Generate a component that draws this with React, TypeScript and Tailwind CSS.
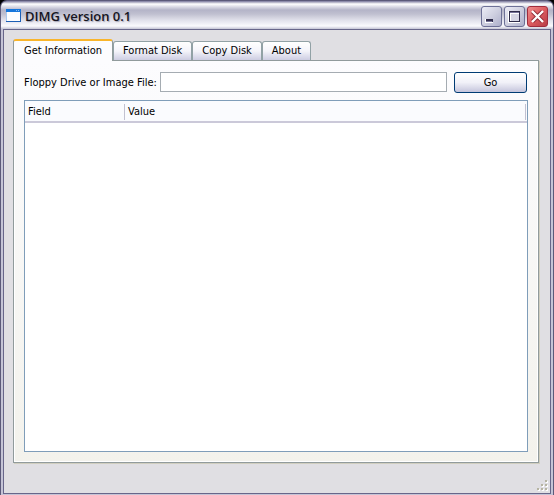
import { useState } from "react";

const TABS = ["Get Information", "Format Disk", "Copy Disk", "About"];

function WindowIcon() {
  return (
    <svg className="h-[15px] w-4" viewBox="0 1 16 15" shapeRendering="crispEdges" aria-hidden="true">
      <rect x="0" y="1" width="15" height="13" fill="#1c5fb5" />
      <rect x="0" y="1" width="15" height="3" fill="#1676dc" />
      <rect x="10" y="2" width="1" height="1" fill="#8dbdf0" />
      <rect x="12" y="2" width="1" height="1" fill="#8dbdf0" />
      <rect x="0" y="4" width="1" height="9" fill="#a9c8ee" />
      <rect x="1" y="4" width="13" height="9" fill="#fcfdff" />
    </svg>
  );
}

function MinimizeIcon() {
  return (
    <svg className="h-[19px] w-[19px]" viewBox="0 0 19 19" shapeRendering="crispEdges" aria-hidden="true">
      <rect x="3" y="12" width="8" height="4" fill="#fff" />
      <rect x="4" y="12" width="7" height="3" fill="#2f2c4a" />
      <rect x="4" y="14" width="6" height="1" fill="#77749a" />
    </svg>
  );
}

function MaximizeIcon() {
  return (
    <svg className="h-[19px] w-[19px]" viewBox="0 0 19 19" shapeRendering="crispEdges" aria-hidden="true">
      <rect x="3" y="4" width="12" height="12" fill="#fff" />
      <rect x="4" y="4" width="11" height="11" fill="#2f2c4a" />
      <rect x="5" y="5" width="9" height="1" fill="#77749a" />
      <rect x="5" y="6" width="9" height="8" fill="#fff" />
      <rect x="6" y="7" width="8" height="7" fill="#d6d6e4" />
    </svg>
  );
}

function CloseIcon() {
  return (
    <svg className="h-[19px] w-[19px]" viewBox="0 0 19 19" aria-hidden="true">
      <path d="M4.5 4.5l10 10M14.5 4.5l-10 10" stroke="#8d2a34" strokeWidth="4" />
      <path d="M4 4l11 11M15 4L4 15" stroke="#fff" strokeWidth="2.4" />
    </svg>
  );
}

function SizeGrip() {
  const dots = [[8, 0], [4, 4], [8, 4], [0, 8], [4, 8], [8, 8]];
  return (
    <svg className="h-3 w-3" viewBox="0 0 12 12" shapeRendering="crispEdges" aria-hidden="true">
      {dots.map(([x, y]) => (
        <g key={`${x}-${y}`}>
          <rect x={x + 1} y={y + 1} width="2" height="2" fill="#fff" />
          <rect x={x} y={y} width="2" height="2" fill="#b6b4a2" />
        </g>
      ))}
    </svg>
  );
}

function TitleBar() {
  const button =
    "flex h-[21px] w-[21px] items-center justify-center rounded-[3px] border border-[#6d7096] bg-linear-to-br from-[#ececf6] via-[#cfd0e0] to-[#adafca]";
  return (
    <header className="flex h-[29px] items-center rounded-t-[7px] border-x border-t border-[#5c5a7a] bg-[linear-gradient(to_bottom,#77759a_0px,#ffffff_3px,#d8d8e4_6px,#b4b4c8_9px,#c0c0d0_13px,#e0e0ea_19px,#fafafd_25px,#c4c4d4_28px)] pt-[3px] pr-[5px] pl-[5px]">
      <WindowIcon />
      <h1 className="ml-[3px] flex-1 font-['Open_Sans',sans-serif] text-[13px] leading-[15px] font-semibold text-[#16151f] [text-shadow:1px_1px_1px_#a7a6b6]">
        DIMG version 0.1
      </h1>
      <div className="flex gap-[2px]">
        <button type="button" aria-label="Minimize" className={button}>
          <MinimizeIcon />
        </button>
        <button type="button" aria-label="Maximize" className={button}>
          <MaximizeIcon />
        </button>
        <button
          type="button"
          aria-label="Close"
          className="flex h-[21px] w-[21px] items-center justify-center rounded-[3px] border border-[#a02c3c] bg-linear-to-br from-[#ee8d8d] via-[#dc5b5f] to-[#b83c46]"
        >
          <CloseIcon />
        </button>
      </div>
    </header>
  );
}

interface TabBarProps {
  active: string;
  onSelect: (tab: string) => void;
}

function TabBar({ active, onSelect }: TabBarProps) {
  return (
    <div role="tablist" className="flex items-end">
      {TABS.map((tab) =>
        tab === active ? (
          <button
            key={tab}
            type="button"
            role="tab"
            aria-selected="true"
            className="relative z-10 -mb-px h-[22px] rounded-t-[3px] border-x border-t-2 border-x-[#919b9c] border-t-[#f9b52b] bg-[#fcfcfe] px-[10px] pb-px leading-4"
            onClick={() => onSelect(tab)}
          >
            {tab}
          </button>
        ) : (
          <button
            key={tab}
            type="button"
            role="tab"
            aria-selected="false"
            className="h-[19px] rounded-t-[3px] border-x border-t border-[#91a1a5] bg-linear-to-b from-white via-[#f4f4fa] to-[#cdcde2] px-[9px] leading-4"
            onClick={() => onSelect(tab)}
          >
            {tab}
          </button>
        ),
      )}
    </div>
  );
}

function InformationPanel() {
  const [source, setSource] = useState("");
  return (
    <section className="flex flex-1 flex-col border border-[#919b9c] bg-[linear-gradient(to_bottom,#fcfcfe,#f3f2ec)] px-[10px] pt-[11px] pb-[10px] shadow-[inset_-1px_-1px_#fff,inset_1px_0_#fff,1px_1px_#d0cebf]">
      <form className="flex items-start pr-px" onSubmit={(event) => event.preventDefault()}>
        <label htmlFor="source" className="mr-[3px] pt-px leading-5">
          Floppy Drive or Image File:
        </label>
        <input
          id="source"
          type="text"
          value={source}
          onChange={(event) => setSource(event.target.value)}
          className="h-5 min-w-0 flex-1 border border-[#a5acb2] bg-white px-1 outline-none"
        />
        <button
          type="submit"
          className="ml-[7px] h-[21px] w-[73px] rounded-[3px] border border-[#003c74] bg-linear-to-b from-white via-[#f1f1f8] to-[#c5c5dc]"
        >
          Go
        </button>
      </form>
      <div className="mt-[7px] flex-1 border border-[#7f9db9] bg-white">
        <table className="w-full table-fixed border-collapse text-left">
          <thead>
            <tr className="h-[21px] border-b-2 border-[#cbc9d9] bg-[#fafbfe]">
              <th scope="col" className="w-[100px] px-0 pt-[2px] pb-0 font-normal">
                <div className="border-r border-[#c1c1d1] pl-[3px] leading-4">Field</div>
              </th>
              <th scope="col" className="px-0 pt-[2px] pb-0 font-normal">
                <div className="mr-px border-r border-[#c1c1d1] pl-[3px] leading-4">Value</div>
              </th>
            </tr>
          </thead>
          <tbody />
        </table>
      </div>
    </section>
  );
}

export default function App() {
  const [tab, setTab] = useState(TABS[0]);
  return (
    <div className="flex min-h-screen flex-col bg-black font-['DejaVu_Sans_Condensed','DejaVu_Sans',sans-serif] text-[11px] leading-4 text-black">
      <TitleBar />
      <div className="flex flex-1 flex-col border-x border-[#5c5a7a] bg-[#c5c4d6] px-[2px] pb-px">
        <main className="flex flex-1 flex-col border border-[#68668a] bg-[#e0dfe3] pt-[9px]">
          <div className="flex flex-1 flex-col pr-[11px] pl-[9px]">
            <TabBar active={tab} onSelect={setTab} />
            <InformationPanel />
          </div>
          <footer className="flex h-[30px] items-end justify-end pr-px pb-px">
            <SizeGrip />
          </footer>
        </main>
      </div>
    </div>
  );
}
